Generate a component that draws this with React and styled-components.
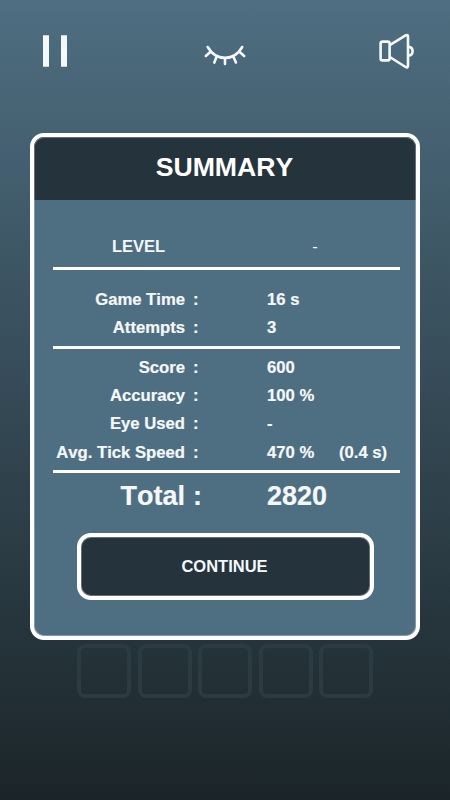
import React from "react";
import styled, { createGlobalStyle } from "styled-components";

const Global = createGlobalStyle`
  * { box-sizing: border-box; }
  body { margin: 0; background: #1c272c; }
`;

const Screen = styled.main`
  display: flex;
  flex-direction: column;
  align-items: center;
  width: 450px;
  height: 800px;
  overflow: hidden;
  background: linear-gradient(#4e6e81 0%, #1b2529 100%);
  color: #f5f8fa;
  font-family: "Liberation Sans", Arial, sans-serif;
  font-weight: 700;
  font-kerning: none;
`;

const TopBar = styled.header`
  display: flex;
  justify-content: space-between;
  align-items: center;
  width: 100%;
  height: 102px;
  padding: 0 35px 0 42px;
`;

const IconButton = styled.button`
  display: flex;
  padding: 0;
  border: 0;
  background: none;
  color: #f5f8fa;
`;

const EyeButton = styled(IconButton)`
  margin: 10px 0 0 5px;
`;

const Dialog = styled.section`
  position: relative;
  display: flex;
  flex-direction: column;
  align-items: center;
  width: 390px;
  height: 507px;
  margin-top: 31px;
  border: 4px solid #fff;
  border-radius: 14px;
  background: #4e6e81;
  overflow: hidden;

  &::after {
    content: "";
    position: absolute;
    inset: 0;
    border-radius: 10px;
    box-shadow: inset 0 0 0 1px rgba(255, 255, 255, 0.3);
    pointer-events: none;
  }
`;

const Title = styled.h1`
  width: 100%;
  height: 63px;
  margin: 0;
  padding-right: 1px;
  background: #25343c;
  color: #fff;
  font-size: 26.67px;
  line-height: 60px;
  text-align: center;
`;

const LevelRow = styled.div`
  display: grid;
  grid-template-columns: 171px 176px;
  width: 347px;
  height: 70px;
  margin-left: 3px;
  padding-top: 37px;
  border-bottom: 3px solid #fff;
  font-size: 16.5px;
  line-height: 19px;
  text-align: center;
`;

const LevelValue = styled.span`
  padding-left: 6px;
  font-weight: 400;
`;

const Group = styled.div`
  width: 347px;
  height: ${(p) => p.$height}px;
  margin-left: 3px;
  padding-top: ${(p) => p.$top}px;
  border-bottom: ${(p) => (p.$last ? "0" : "3px solid #fff")};
`;

const Row = styled.div`
  display: grid;
  grid-template-columns: 132px 82px 72px auto;
  height: 28.4px;
  font-size: ${(p) => (p.$big ? 27 : 16.67)}px;
  line-height: 28px;
  white-space: nowrap;
  -webkit-text-stroke: 0.2px currentColor;
`;

const Label = styled.span`
  text-align: right;
`;

const Colon = styled.span`
  padding-left: 8px;
`;

const Continue = styled.button`
  flex: none;
  width: 297px;
  height: 67px;
  margin-top: 18px;
  padding: 0 1px 0 0;
  border: 4px solid #fff;
  border-radius: 14px;
  background: #25343c;
  box-shadow: inset 0 0 0 1px rgba(255, 255, 255, 0.3);
  color: #f5f8fa;
  font: 700 16.5px "Liberation Sans", Arial, sans-serif;
`;

const Slots = styled.div`
  display: flex;
  gap: 6.5px;
  margin-top: 4px;
`;

const Slot = styled.span`
  width: 54px;
  height: 54px;
  border: 4px solid #2c3a41;
  border-radius: 8px;
`;

function Stat({ label, value, extra, big }) {
  return (
    <Row $big={big}>
      <Label>{label}</Label>
      <Colon>:</Colon>
      <span>{value}</span>
      {extra && <span>{extra}</span>}
    </Row>
  );
}

export default function App() {
  return (
    <Screen>
      <Global />
      <TopBar>
        <IconButton aria-label="Pause">
          <svg width="26" height="32" viewBox="0 0 26 32" fill="currentColor">
            <path d="M1 .3h6v31.4H1zM19 .3h6v31.4h-6z" />
          </svg>
        </IconButton>
        <EyeButton aria-label="Eye">
          <svg width="44" height="24" viewBox="0 0 44 24" fill="none" stroke="currentColor" strokeWidth="2.6" strokeLinecap="round">
            <path d="M4.7 3C9 10.5 14.5 13.9 22 13.9S35 10.5 39.2 3M7.3 8L2.8 12M13.6 12.8L11.3 18.6M22 14V20M30.4 12.8l2.5 5.8M36.7 8l4.5 4" />
          </svg>
        </EyeButton>
        <IconButton aria-label="Sound">
          <svg width="38" height="38" viewBox="0 0 38 38" fill="none" stroke="currentColor" strokeWidth="2.6" strokeLinejoin="round">
            <rect x="3.6" y="9.6" width="9" height="18.8" rx="2" />
            <path d="M12.8 13.2L28.6 3.4Q31 2.2 31 5V33Q31 36.5 28.6 35L12.8 25M31.3 14.6C37 15.4 37 22.8 31.3 23.8" />
          </svg>
        </IconButton>
      </TopBar>
      <Dialog>
        <Title>SUMMARY</Title>
        <LevelRow>
          <span>LEVEL</span>
          <LevelValue>-</LevelValue>
        </LevelRow>
        <Group $height={79} $top={16}>
          <Stat label="Game Time" value="16 s" />
          <Stat label="Attempts" value="3" />
        </Group>
        <Group $height={124} $top={4.6}>
          <Stat label="Score" value="600" />
          <Stat label="Accuracy" value="100 %" />
          <Stat label="Eye Used" value="-" />
          <Stat label="Avg. Tick Speed" value="470 %" extra="(0.4 s)" />
        </Group>
        <Group $height={42} $top={9} $last>
          <Stat label="Total" value="2820" big />
        </Group>
        <Continue>CONTINUE</Continue>
      </Dialog>
      <Slots>
        {[0, 1, 2, 3, 4].map((i) => (
          <Slot key={i} />
        ))}
      </Slots>
    </Screen>
  );
}
